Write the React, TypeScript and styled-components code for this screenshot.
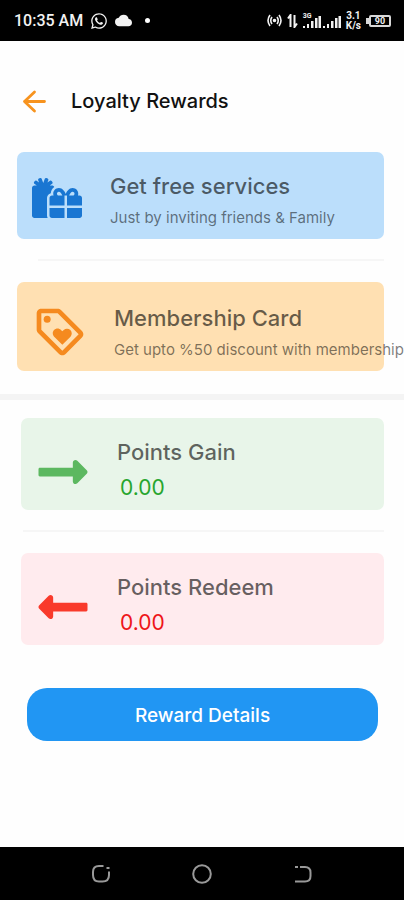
import React from "react";
import styled, { createGlobalStyle } from "styled-components";
import { FaGifts, FaLongArrowAltLeft, FaLongArrowAltRight, FaWhatsapp } from "react-icons/fa";
import { MdCloud, MdOutlineLoyalty } from "react-icons/md";

const GlobalStyle = createGlobalStyle`
  *, *::before, *::after { box-sizing: border-box; }
  body { margin: 0; background: #fff; }
  h1, h2, p { margin: 0; font-weight: inherit; }
  button { font: inherit; border: 0; padding: 0; background: none; cursor: pointer; }
`;

const Screen = styled.div`
  display: flex;
  flex-direction: column;
  min-height: 100vh;
  overflow-x: hidden;
  background: #fefefe;
  font-family: Inter, Roboto, sans-serif;
`;

const StatusBar = styled.header`
  display: flex;
  align-items: center;
  justify-content: space-between;
  height: 41px;
  padding: 0 13px 0 14px;
  background: #000;
  color: #f2f2f2;
  font-family: Roboto, sans-serif;
`;

const StatusGroup = styled.div<{ $gap: number }>`
  display: flex;
  align-items: center;
  gap: ${({ $gap }) => $gap}px;
`;

const Clock = styled.span`
  font-size: 16px;
  font-weight: 500;
  line-height: 20px;
`;

const Dot = styled.span`
  width: 5px;
  height: 5px;
  margin-left: 6px;
  border-radius: 50%;
  background: #fff;
`;

const Signal = styled.span`
  display: grid;
  justify-items: start;
  font-size: 7px;
  font-weight: 700;
  line-height: 6px;

  > * { grid-area: 1 / 1; }
`;

const Speed = styled.span`
  display: flex;
  flex-direction: column;
  align-items: center;
  font-size: 10px;
  font-weight: 700;
  line-height: 10px;
`;

const Battery = styled.span`
  display: flex;
  align-items: center;
`;

const BatteryTip = styled.span`
  width: 3px;
  height: 6px;
  background: #d8d8d8;
`;

const BatteryBody = styled.span`
  width: 22px;
  border: 2px solid #d8d8d8;
  border-radius: 2px;
  font-size: 9px;
  font-weight: 700;
  line-height: 8px;
  text-align: center;
`;

const TitleBar = styled.div`
  display: flex;
  align-items: center;
  gap: 24px;
  margin-top: 40px;
  padding: 0 22px;
`;

const BackButton = styled.button`
  display: flex;
  color: #f7931e;
`;

const PageTitle = styled.h1`
  color: #111;
  font-size: 20px;
  font-weight: 500;
  line-height: 40px;
`;

const Cards = styled.main`
  display: flex;
  flex-direction: column;
  margin-top: 31px;
`;

const Card = styled.section<{ $tone: string; $left: number; $padding: string }>`
  display: flex;
  align-items: center;
  margin: 0 20px 0 ${({ $left }) => $left}px;
  padding: ${({ $padding }) => $padding};
  border-radius: 7px;
  background: ${({ $tone }) => $tone};
`;

const CardIcon = styled.span<{ $color: string; $width: number; $padding?: string }>`
  display: flex;
  flex: none;
  width: ${({ $width }) => $width}px;
  padding: ${({ $padding = "0" }) => $padding};
  color: ${({ $color }) => $color};
`;

const CardText = styled.div`
  display: flex;
  flex-direction: column;
  gap: 4px;
  white-space: nowrap;
`;

const CardTitle = styled.h2`
  color: rgba(0, 0, 0, 0.6);
  font-size: 22px;
  font-weight: 500;
  line-height: 32px;
`;

const CardNote = styled.p`
  color: rgba(0, 0, 0, 0.52);
  font-size: 15px;
  line-height: 24px;
`;

const Amount = styled.p<{ $color: string }>`
  padding-left: 3px;
  color: ${({ $color }) => $color};
  font-size: 21px;
  line-height: 32px;
`;

const Divider = styled.hr<{ $left: number }>`
  width: auto;
  height: 2px;
  margin: 20px 20px 21px ${({ $left }) => $left}px;
  border: 0;
  background: #f6f6f6;
`;

const SectionBreak = styled.hr`
  width: 100%;
  height: 6px;
  margin: 23px 0 18px;
  border: 0;
  background: #f4f4f4;
`;

const DetailsButton = styled.button`
  && {
    margin: 43px 26px 40px 27px;
    padding-top: 3px;
    border-radius: 20px;
    background: #2196f3;
    color: #fff;
    font-size: 19px;
    font-weight: 500;
    line-height: 50px;
  }
`;

const NavBar = styled.nav`
  display: flex;
  align-items: center;
  justify-content: center;
  gap: 81px;
  height: 53px;
  margin-top: auto;
  background: #000;
  color: #999;
`;

const NavButton = styled.button`
  display: flex;
  color: inherit;
`;

const BackArrow = () => (
  <svg width="25" height="24" viewBox="0 0 25 24" fill="none" stroke="currentColor" strokeWidth="2.8" strokeLinecap="round" strokeLinejoin="round" aria-hidden="true">
    <path d="M22.500 12.500H2.500M12.500 3 2.500 12.500 12.500 22" />
  </svg>
);

const Hotspot = () => (
  <svg width="15" height="13" viewBox="0 0 15 13" fill="none" stroke="currentColor" strokeWidth="1.6" aria-hidden="true">
    <path d="M3 1Q-1 6.500 3 12M5 3Q2.500 6.500 5 10M12 1Q16 6.500 12 12M10 3Q12.500 6.500 10 10" />
    <circle cx="7.500" cy="6.500" r="1" fill="currentColor" />
  </svg>
);

const DataArrows = () => (
  <svg width="11" height="14" viewBox="0 0 11 14" fill="none" stroke="currentColor" strokeWidth="2" aria-hidden="true">
    <path d="M3.500 13V1L1 4.500M7.500 1V13L10 9.500" />
  </svg>
);

const Bars = () => (
  <svg width="18" height="16" viewBox="0 0 18 16" fill="currentColor" aria-hidden="true">
    <path d="M0 13h2v2H0zM4 11h2v4H4zM8 8h2.500v7H8zM12 5h2.500v10H12zM15.500 3H18v12h-2.500z" />
  </svg>
);

const RecentsIcon = () => (
  <svg width="20" height="20" viewBox="0 0 20 20" fill="none" stroke="currentColor" strokeWidth="2" aria-hidden="true">
    <path d="M12.500 2H8Q2 2 2 8V11Q2 17.500 8 17.500H11.500Q18 17.500 18 11V7.500" />
    <path d="M15.500 4h3" />
  </svg>
);

const HomeIcon = () => (
  <svg width="20" height="20" viewBox="0 0 20 20" fill="none" stroke="currentColor" strokeWidth="2" aria-hidden="true">
    <circle cx="10" cy="10" r="8.800" />
  </svg>
);

const ReturnIcon = () => (
  <svg width="20" height="20" viewBox="0 0 20 20" fill="none" stroke="currentColor" strokeWidth="2" aria-hidden="true">
    <path d="M2 3h3M7 3h5Q17.500 3 17.500 8.500V12Q17.500 17.500 12 17.500H2" />
  </svg>
);

export default function App() {
  return (
    <>
      <GlobalStyle />
      <Screen>
        <StatusBar>
          <StatusGroup $gap={7}>
            <Clock>10:35 AM</Clock>
            <FaWhatsapp size={18} />
            <MdCloud size={17} />
            <Dot />
          </StatusGroup>
          <StatusGroup $gap={5}>
            <Hotspot />
            <DataArrows />
            <StatusGroup $gap={2}>
              <Signal>
                <Bars />
                <span>3G</span>
              </Signal>
              <Bars />
            </StatusGroup>
            <Speed>
              <span>3.1</span>
              <span>K/s</span>
            </Speed>
            <Battery>
              <BatteryTip />
              <BatteryBody>90</BatteryBody>
            </Battery>
          </StatusGroup>
        </StatusBar>

        <TitleBar>
          <BackButton aria-label="Back">
            <BackArrow />
          </BackButton>
          <PageTitle>Loyalty Rewards</PageTitle>
        </TitleBar>

        <Cards>
          <Card $tone="#bbdefb" $left={17} $padding="18px 14px 9px">
            <CardIcon $color="#1976d2" $width={79} $padding="0 0 4px 1px">
              <FaGifts size={50} />
            </CardIcon>
            <CardText>
              <CardTitle>Get free services</CardTitle>
              <CardNote>Just by inviting friends &amp; Family</CardNote>
            </CardText>
          </Card>
          <Divider $left={38} />
          <Card $tone="#ffe0b2" $left={17} $padding="20px 15px 9px">
            <CardIcon $color="#f58a1f" $width={82}>
              <MdOutlineLoyalty size={56} />
            </CardIcon>
            <CardText>
              <CardTitle>Membership Card</CardTitle>
              <CardNote>Get upto %50 discount with membership</CardNote>
            </CardText>
          </Card>
          <SectionBreak />
          <Card $tone="#e8f5e9" $left={21} $padding="18px 14px 6px">
            <CardIcon $color="#5cb860" $width={82} $padding="4px 0 0">
              <FaLongArrowAltRight size={56} />
            </CardIcon>
            <CardText>
              <CardTitle>Points Gain</CardTitle>
              <Amount $color="#27a52e">0.00</Amount>
            </CardText>
          </Card>
          <Divider $left={23} />
          <Card $tone="#ffebee" $left={21} $padding="18px 14px 6px">
            <CardIcon $color="#f93a2b" $width={82} $padding="4px 0 0">
              <FaLongArrowAltLeft size={56} />
            </CardIcon>
            <CardText>
              <CardTitle>Points Redeem</CardTitle>
              <Amount $color="#ee1519">0.00</Amount>
            </CardText>
          </Card>
          <DetailsButton>Reward Details</DetailsButton>
        </Cards>

        <NavBar>
          <NavButton aria-label="Recent apps"><RecentsIcon /></NavButton>
          <NavButton aria-label="Home"><HomeIcon /></NavButton>
          <NavButton aria-label="Return"><ReturnIcon /></NavButton>
        </NavBar>
      </Screen>
    </>
  );
}
